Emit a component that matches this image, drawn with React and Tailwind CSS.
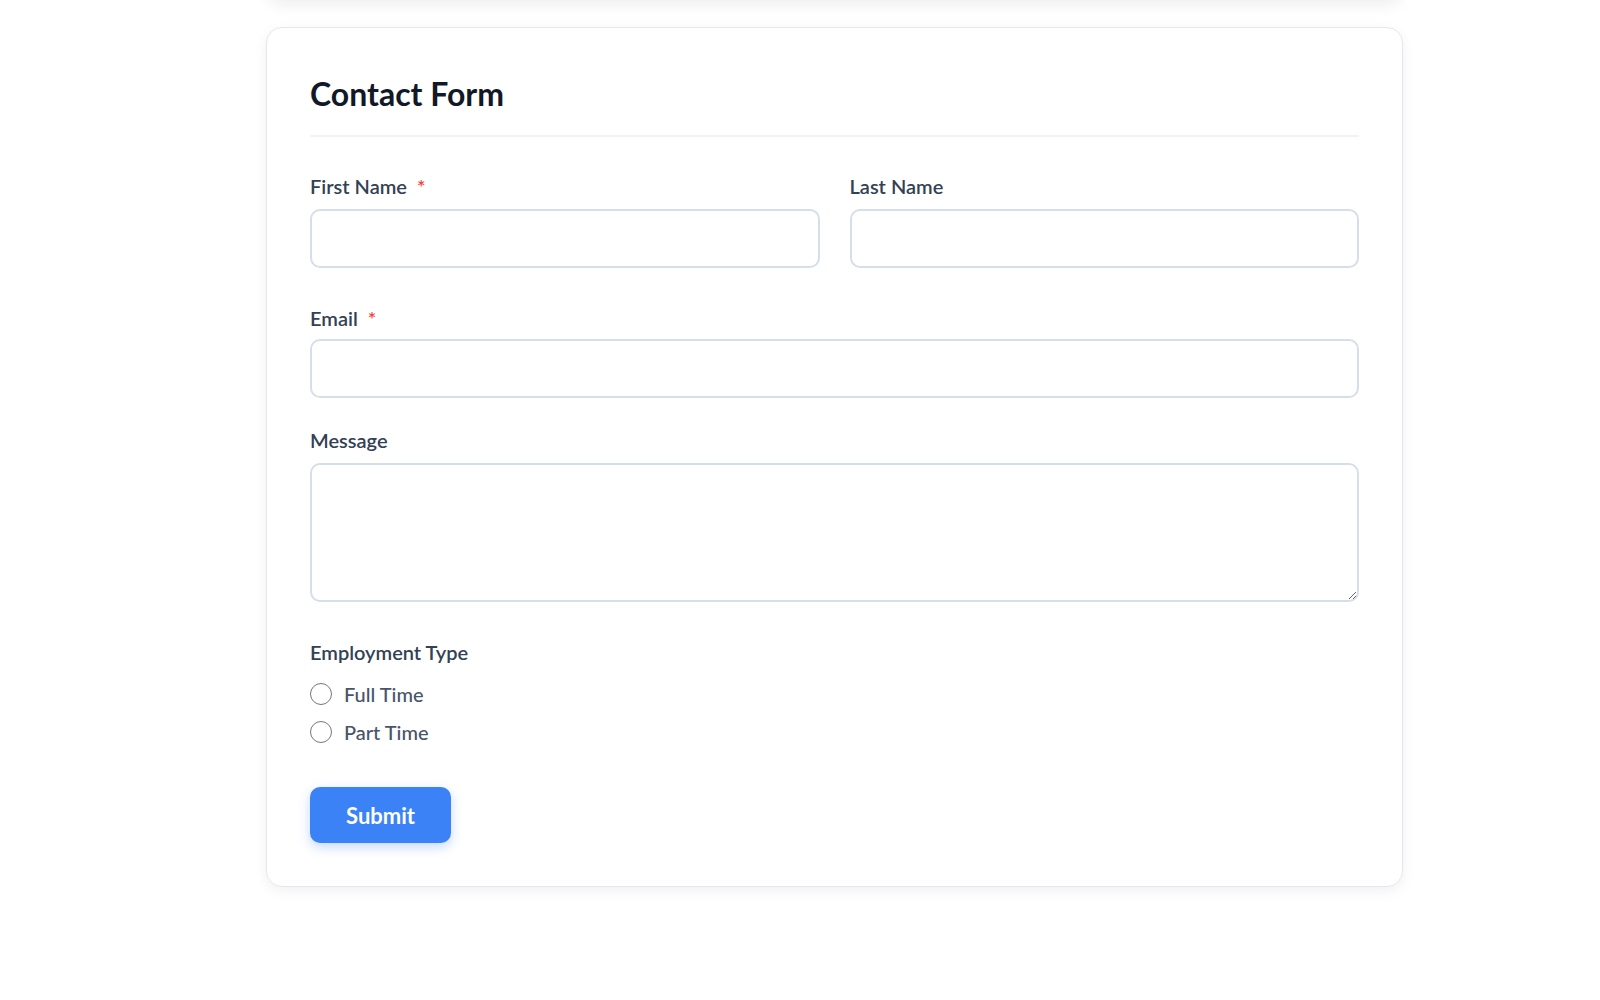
import { useState } from 'react';

const font = { fontFamily: 'Lato, "Open Sans", Arial, sans-serif' };

function Label({ children, required, className = '' }) {
  return (
    <label className={`block text-[20px] leading-[24px] font-semibold text-[#334155] ${className}`}>
      {children}
      {required && <span className="ml-[10px] text-[#ef4444]">*</span>}
    </label>
  );
}

const inputCls =
  'block w-full h-[59px] rounded-[10px] border-2 border-[#d6dee9] bg-white px-4 text-[18px] text-[#334155] outline-none focus:border-[#3b82f6]';

export default function App() {
  const [employment, setEmployment] = useState('');

  return (
    <div className="min-h-screen bg-white" style={font}>
      {/* previous card, mostly scrolled out of view */}
      <div className="ml-[266px] w-[1137px] h-10 -mt-[42px] mb-[29px] rounded-2xl bg-white shadow-[0_6px_16px_rgba(15,23,42,0.08)]" />

      <div className="ml-[266px] w-[1137px] rounded-2xl border border-[#e3e8f0] bg-white px-[43px] pt-[46px] pb-[43px] shadow-[0_4px_14px_rgba(15,23,42,0.06)]">
        {/* Header */}
        <div className="pb-[21px] border-b-2 border-[#f0f3f7]">
          <h2 className="text-[32px] leading-[40px] font-bold text-[#111827]">Contact Form</h2>
        </div>

        {/* Name row */}
        <div className="mt-[37px] grid grid-cols-2 gap-x-[30px]">
          <div>
            <Label required className="mb-[11px]">First Name</Label>
            <input type="text" className={inputCls} />
          </div>
          <div>
            <Label className="mb-[11px]">Last Name</Label>
            <input type="text" className={inputCls} />
          </div>
        </div>

        {/* Email */}
        <div className="mt-[38px]">
          <Label required className="mb-[9px]">Email</Label>
          <input type="email" className={inputCls} />
        </div>

        {/* Message */}
        <div className="mt-[30px]">
          <Label className="mb-[11px]">Message</Label>
          <textarea className="block w-full h-[139px] rounded-[10px] border-2 border-[#d6dee9] bg-white px-4 py-3 text-[18px] text-[#334155] outline-none focus:border-[#3b82f6]" />
        </div>

        {/* Employment type */}
        <div className="mt-[38px]">
          <Label>Employment Type</Label>
          <div className="mt-[18px] flex flex-col gap-[14px]">
            {['Full Time', 'Part Time'].map((opt) => (
              <label key={opt} className="flex h-6 items-center gap-[12px] cursor-pointer">
                <input
                  type="radio"
                  name="employment"
                  value={opt}
                  checked={employment === opt}
                  onChange={() => setEmployment(opt)}
                  className="m-0 h-[22px] w-[22px]"
                />
                <span className="text-[20px] font-medium text-[#475569]">{opt}</span>
              </label>
            ))}
          </div>
        </div>

        {/* Submit */}
        <button
          type="submit"
          className="mt-[43px] block h-[56px] w-[141px] rounded-[10px] bg-[#3b82f6] text-[22px] font-bold text-white shadow-[0_4px_12px_rgba(59,130,246,0.3)]"
        >
          Submit
        </button>
      </div>
    </div>
  );
}
